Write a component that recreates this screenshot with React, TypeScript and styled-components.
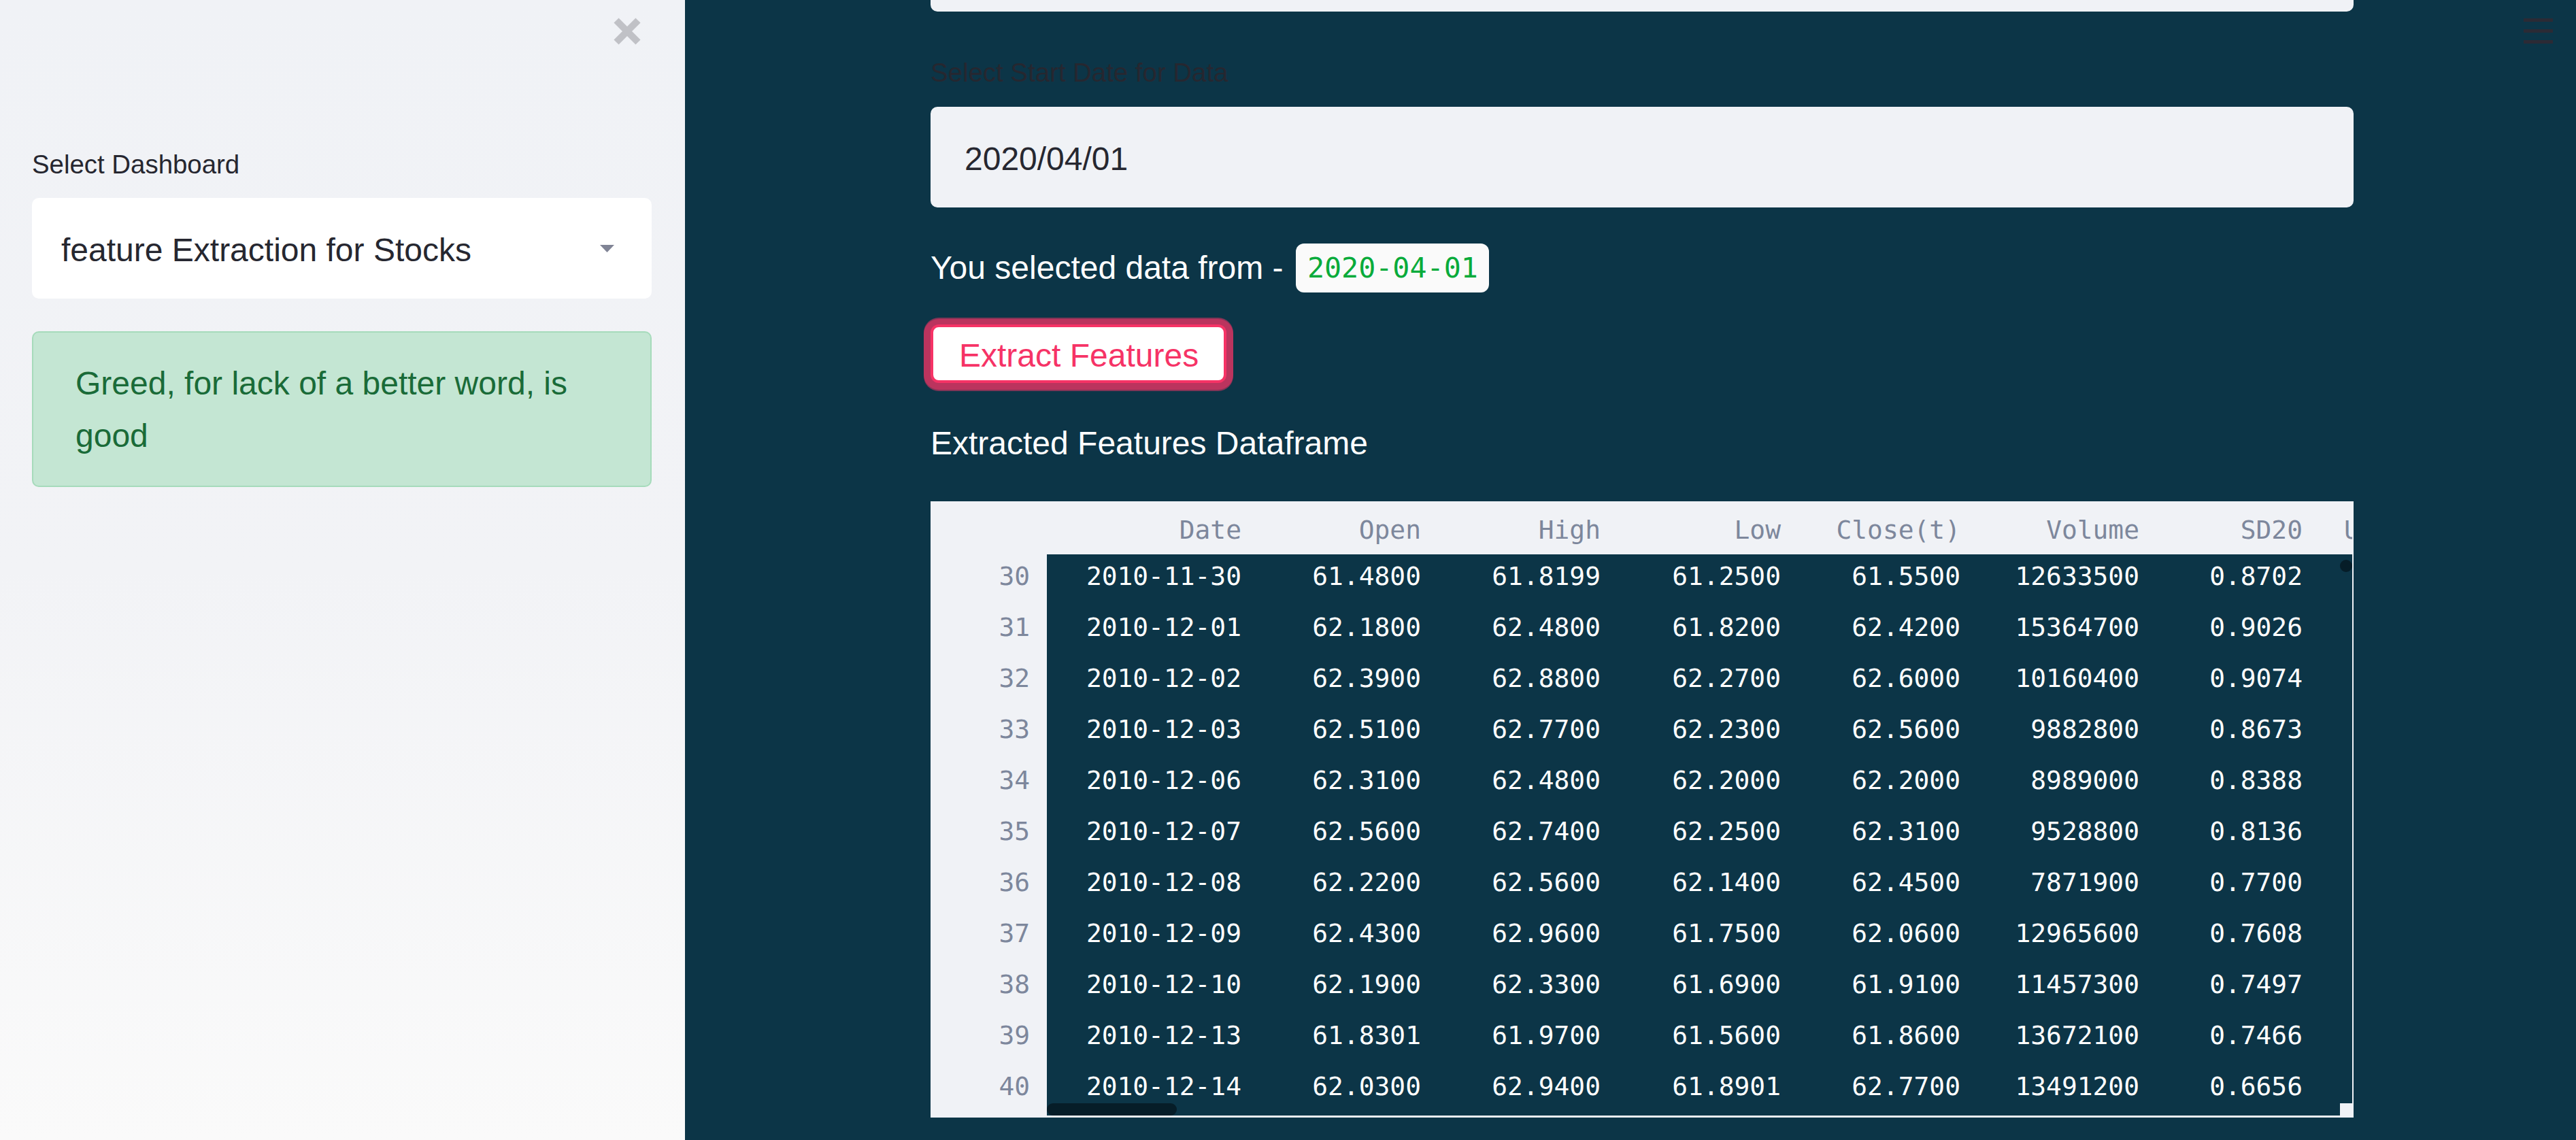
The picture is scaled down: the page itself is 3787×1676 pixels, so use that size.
import React from "react";
import styled, { createGlobalStyle } from "styled-components";

const GlobalStyle = createGlobalStyle`
  html, body {
    margin: 0;
    padding: 0;
    width: 3787px;
    height: 1676px;
    overflow: hidden;
    font-family: "Liberation Sans", Arial, sans-serif;
  }
  * { box-sizing: border-box; }
`;

const Page = styled.div`
  display: flex;
  width: 3787px;
  height: 1676px;
`;

const Sidebar = styled.aside`
  flex: 0 0 1007px;
  height: 100%;
  background: linear-gradient(180deg, #f0f2f6 0%, #f2f3f6 50%, #fafafa 100%);
  padding: 0 49px 0 47px;
  display: flex;
  flex-direction: column;
`;

const CloseRow = styled.div`
  height: 92px;
  display: flex;
  justify-content: flex-end;
  align-items: center;
  padding-right: 15px;
`;

const CloseButton = styled.button`
  border: none;
  background: transparent;
  padding: 0;
  width: 42px;
  height: 40px;
  display: flex;
  align-items: center;
  justify-content: center;
  cursor: pointer;
`;

const SideLabel = styled.label`
  display: block;
  margin-top: 126px;
  font-size: 38.4px;
  line-height: 48px;
  color: #262730;
`;

const SelectBox = styled.div`
  margin-top: 25px;
  height: 148px;
  background: #ffffff;
  border-radius: 10px;
  display: flex;
  align-items: center;
  justify-content: space-between;
  padding: 0 55px 0 43px;
`;

const FieldText = styled.span`
  font-size: 48px;
  line-height: 142px;
  padding-top: 6px;
  color: #262730;
  white-space: nowrap;
`;

const Alert = styled.div`
  margin-top: 48px;
  border: 2px solid #a6dbbb;
  border-radius: 10px;
  background: #c4e6d3;
  padding: 37px 62px 34px 62px;
  font-size: 48px;
  line-height: 76.8px;
  color: #1a6b38;
`;

const Main = styled.main`
  flex: 1;
  height: 100%;
  background: #0c3547;
  position: relative;
  overflow: hidden;
  display: flex;
  justify-content: center;
  padding-left: 34px;
`;

const Hamburger = styled.div`
  position: absolute;
  top: 27px;
  right: 34px;
  width: 43px;
  display: flex;
  flex-direction: column;
  gap: 11px;
`;

const HamburgerBar = styled.span`
  display: block;
  height: 5px;
  background: #2b2a35;
`;

const Content = styled.div`
  width: 2092px;
  flex-shrink: 0;
  display: flex;
  flex-direction: column;
`;

const TopSelect = styled.div`
  height: 148px;
  margin-top: -131px;
  background: #f0f2f6;
  border-radius: 10px;
`;

const FieldLabel = styled.label`
  display: block;
  margin-top: 66px;
  font-size: 38.4px;
  line-height: 48px;
  color: #262730;
`;

const DateBox = styled.div`
  margin-top: 26px;
  height: 148px;
  background: #f0f2f6;
  border-radius: 10px;
  display: flex;
  align-items: center;
  padding-left: 50px;
`;

const SelectedRow = styled.div`
  margin-top: 53px;
  height: 72px;
  display: flex;
  align-items: center;
  font-size: 48px;
  line-height: 72px;
  color: #ffffff;
  white-space: pre;
`;

const CodePill = styled.code`
  display: inline-block;
  height: 72px;
  margin-left: 5px;
  padding: 0 16px 0 17px;
  background: #fafafa;
  border-radius: 12px;
  font-family: "DejaVu Sans Mono", "Liberation Mono", monospace;
  font-size: 41.7px;
  line-height: 72px;
  color: #09ab3b;
`;

const ActionButton = styled.button`
  margin-top: 47px;
  align-self: flex-start;
  height: 86px;
  padding: 5px 37px 0 38px;
  border: 4px solid #f63366;
  border-radius: 12px;
  background: #ffffff;
  box-shadow: 0 0 0 10px rgba(246, 51, 102, 0.5), 0 2px 0 10px rgba(246, 51, 102, 0.5);
  font-family: "Liberation Sans", Arial, sans-serif;
  font-size: 48px;
  line-height: 73px;
  color: #f63366;
  white-space: nowrap;
  cursor: pointer;
`;

const Heading = styled.p`
  margin: 51px 0 0 0;
  font-size: 48px;
  line-height: 76.8px;
  color: #ffffff;
`;

const Frame = styled.div`
  margin-top: 46px;
  height: 906px;
  background: #f0f2f6;
  overflow: hidden;
  display: flex;
  flex-direction: column;
  font-family: "DejaVu Sans Mono", "Liberation Mono", monospace;
  font-size: 37.9px;
`;

const COLS = "171px 310px 264px 264px 265px 264px 263px 240px 289px";
const DATA_COLS = "310px 264px 264px 265px 264px 263px 240px 289px";

const HeaderRow = styled.div`
  flex: 0 0 78px;
  width: calc(100% - 2px);
  overflow: hidden;
  display: grid;
  grid-template-columns: ${COLS};
`;

const HeaderCell = styled.div`
  height: 78px;
  padding: 12px 24px 0 0;
  line-height: 60px;
  text-align: right;
  color: #7d879c;
  white-space: nowrap;
`;

const Body = styled.div`
  flex: 1;
  display: flex;
  padding: 0 2px 3px 0;
`;

const IndexCol = styled.div`
  flex: 0 0 171px;
  display: flex;
  flex-direction: column;
`;

const IndexCell = styled.div`
  height: 75px;
  padding: 2px 25px 13px 0;
  line-height: 60px;
  text-align: right;
  color: #7d879c;
`;

const DataPane = styled.div`
  flex: 1;
  position: relative;
  overflow: hidden;
  background: #0c3547;
`;

const DataRow = styled.div`
  display: grid;
  grid-template-columns: ${DATA_COLS};
  height: 75px;
`;

const DataCell = styled.div`
  padding: 2px 24px 13px 0;
  line-height: 60px;
  text-align: right;
  color: #ffffff;
  white-space: nowrap;
`;

const HScrollThumb = styled.div`
  position: absolute;
  left: 0;
  bottom: 0;
  width: 191px;
  height: 18px;
  border-radius: 9px;
  background: #061d28;
`;

const VScrollThumb = styled.div`
  position: absolute;
  right: 0;
  top: 8px;
  width: 18px;
  height: 18px;
  border-radius: 9px;
  background: #061d28;
`;

const ScrollCorner = styled.div`
  position: absolute;
  right: 0;
  bottom: 0;
  width: 18px;
  height: 18px;
  background: #f0f2f6;
`;

const headers = ["", "Date", "Open", "High", "Low", "Close(t)", "Volume", "SD20", "Upper Band"];

const rows: [number, string, string, string, string, string, string, string][] = [
  [30, "2010-11-30", "61.4800", "61.8199", "61.2500", "61.5500", "12633500", "0.8702"],
  [31, "2010-12-01", "62.1800", "62.4800", "61.8200", "62.4200", "15364700", "0.9026"],
  [32, "2010-12-02", "62.3900", "62.8800", "62.2700", "62.6000", "10160400", "0.9074"],
  [33, "2010-12-03", "62.5100", "62.7700", "62.2300", "62.5600", "9882800", "0.8673"],
  [34, "2010-12-06", "62.3100", "62.4800", "62.2000", "62.2000", "8989000", "0.8388"],
  [35, "2010-12-07", "62.5600", "62.7400", "62.2500", "62.3100", "9528800", "0.8136"],
  [36, "2010-12-08", "62.2200", "62.5600", "62.1400", "62.4500", "7871900", "0.7700"],
  [37, "2010-12-09", "62.4300", "62.9600", "61.7500", "62.0600", "12965600", "0.7608"],
  [38, "2010-12-10", "62.1900", "62.3300", "61.6900", "61.9100", "11457300", "0.7497"],
  [39, "2010-12-13", "61.8301", "61.9700", "61.5600", "61.8600", "13672100", "0.7466"],
  [40, "2010-12-14", "62.0300", "62.9400", "61.8901", "62.7700", "13491200", "0.6656"],
];

const CloseIcon = () => (
  <svg width="42" height="40" viewBox="0 0 42 40">
    <path d="M5 4 L37 36 M37 4 L5 36" stroke="#c0c1c6" strokeWidth="10" fill="none" />
  </svg>
);

const CaretDown = () => (
  <svg width="21" height="11" viewBox="0 0 21 11">
    <path d="M0 0 H21 L10.5 11 Z" fill="#808495" />
  </svg>
);

export default function App() {
  return (
    <>
      <GlobalStyle />
      <Page>
        <Sidebar>
          <CloseRow>
            <CloseButton aria-label="Close sidebar">
              <CloseIcon />
            </CloseButton>
          </CloseRow>
          <SideLabel>Select Dashboard</SideLabel>
          <SelectBox>
            <FieldText>feature Extraction for Stocks</FieldText>
            <CaretDown />
          </SelectBox>
          <Alert>Greed, for lack of a better word, is good</Alert>
        </Sidebar>
        <Main>
          <Hamburger>
            <HamburgerBar />
            <HamburgerBar />
            <HamburgerBar />
          </Hamburger>
          <Content>
            <TopSelect />
            <FieldLabel>Select Start Date for Data</FieldLabel>
            <DateBox>
              <FieldText>2020/04/01</FieldText>
            </DateBox>
            <SelectedRow>
              {"You selected data from - "}
              <CodePill>2020-04-01</CodePill>
            </SelectedRow>
            <ActionButton>Extract Features</ActionButton>
            <Heading>Extracted Features Dataframe</Heading>
            <Frame>
              <HeaderRow>
                {headers.map((h, i) => (
                  <HeaderCell key={i}>{h}</HeaderCell>
                ))}
              </HeaderRow>
              <Body>
                <IndexCol>
                  {rows.map((r) => (
                    <IndexCell key={r[0]}>{r[0]}</IndexCell>
                  ))}
                </IndexCol>
                <DataPane>
                  {rows.map((r) => (
                    <DataRow key={r[0]}>
                      {r.slice(1).map((v, j) => (
                        <DataCell key={j}>{v}</DataCell>
                      ))}
                      <DataCell />
                    </DataRow>
                  ))}
                  <VScrollThumb />
                  <HScrollThumb />
                  <ScrollCorner />
                </DataPane>
              </Body>
            </Frame>
          </Content>
        </Main>
      </Page>
    </>
  );
}
